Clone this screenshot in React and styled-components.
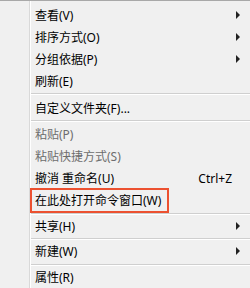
import React from "react";
import styled, { createGlobalStyle } from "styled-components";

const Global = createGlobalStyle`
  html, body { margin: 0; padding: 0; background: #f0f0f0; }
  body { width: 250px; height: 288px; overflow: hidden; }
`;

const Menu = styled.div`
  width: 250px;
  height: 288px;
  box-sizing: border-box;
  background: #f0f0f0;
  border-top: 1px solid #a8a8a8;
  display: flex;
  font-family: "Noto Sans", "Noto Sans CJK SC", sans-serif;
  font-size: 12px;
  color: #000;
`;

const Gutter = styled.div`
  width: 29px;
  flex: none;
  border-right: 1px solid #d9d9d9;
  box-shadow: 1px 0 0 #ffffff;
`;

const List = styled.div`
  flex: 1;
  display: flex;
  flex-direction: column;
  padding-top: 3px;
  margin-left: 1px;
`;

const Item = styled.div`
  height: 22px;
  flex: none;
  display: flex;
  align-items: center;
  padding-left: 4px;
  padding-right: 9px;
  box-sizing: border-box;
  color: ${(p) => (p.$disabled ? "#6d6d6d" : "#000")};
  position: relative;
`;

const Label = styled.span`
  flex: 1;
  white-space: nowrap;
`;

const Shortcut = styled.span`
  margin-right: 9px;
  white-space: nowrap;
`;

const Highlight = styled.div`
  position: absolute;
  left: -1px;
  top: -1px;
  width: 139px;
  height: 25px;
  box-sizing: border-box;
  border: 2px solid #ec5130;
  pointer-events: none;
`;

const Separator = styled.div`
  height: 1px;
  flex: none;
  background: #cfcfcf;
  border-bottom: 1px solid #ffffff;
  margin: ${(p) => p.$m || "1px 0 1px"};
`;

const Arrow = () => (
  <svg width="5" height="8" viewBox="0 0 5 8">
    <path d="M0 0 L4 4 L0 8 Z" fill="#222" />
  </svg>
);

export default function App() {
  return (
    <>
      <Global />
      <Menu>
        <Gutter />
        <List>
          <Item><Label>查看(V)</Label><Arrow /></Item>
          <Item><Label>排序方式(O)</Label><Arrow /></Item>
          <Item><Label>分组依据(P)</Label><Arrow /></Item>
          <Item><Label>刷新(E)</Label></Item>
          <Separator $m="1px 0 2px" />
          <Item><Label>自定义文件夹(F)...</Label></Item>
          <Separator $m="1px 0 1px" />
          <Item $disabled><Label>粘贴(P)</Label></Item>
          <Item $disabled><Label>粘贴快捷方式(S)</Label></Item>
          <Item><Label>撤消 重命名(U)</Label><Shortcut>Ctrl+Z</Shortcut></Item>
          <Item><Label>在此处打开命令窗口(W)</Label><Highlight /></Item>
          <Separator $m="2px 0 0" />
          <Item><Label>共享(H)</Label><Arrow /></Item>
          <Separator $m="1px 0 0" />
          <Item><Label>新建(W)</Label><Arrow /></Item>
          <Separator $m="2px 0 0" />
          <Item><Label>属性(R)</Label></Item>
        </List>
      </Menu>
    </>
  );
}
